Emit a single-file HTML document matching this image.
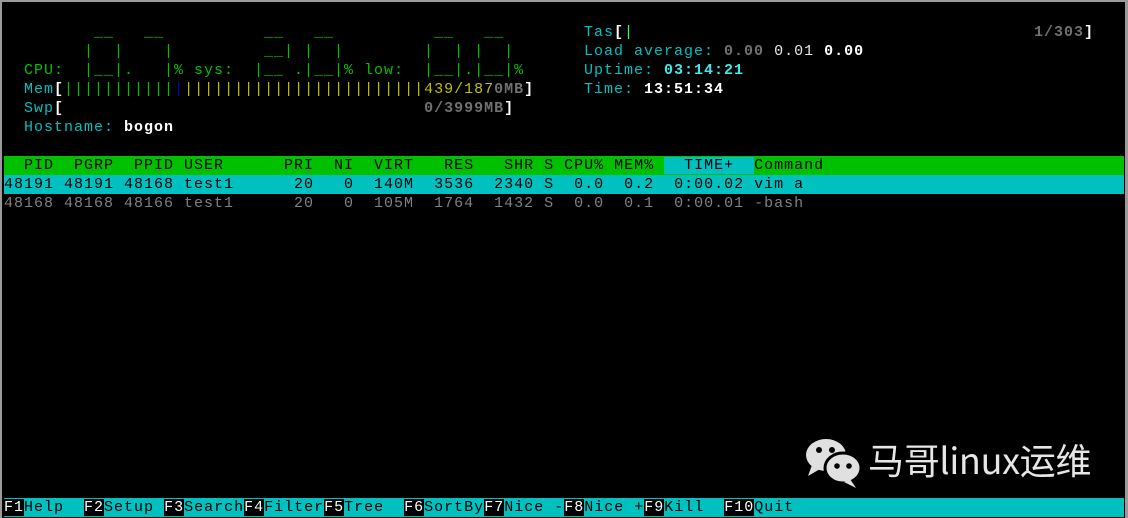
<!DOCTYPE html>
<html><head><meta charset="utf-8"><style>
body{margin:0;background:#000;width:1128px;height:518px;overflow:hidden;position:relative}
#f{position:absolute;left:0;top:0;width:1128px;height:518px;box-sizing:border-box;border-top:2px solid #9a9a9a;border-left:2px solid #9a9a9a;border-right:3px solid #9a9a9a}
#t{position:absolute;left:4px;top:4px;width:1120px;overflow:hidden;font-family:"Liberation Mono",monospace;font-size:15px;letter-spacing:1px;line-height:19px;color:#c0c0c0}
.r{white-space:pre;height:19px;position:relative;overflow:hidden}
.g{color:#00c000}.c{color:#00c0c0}.y{color:#c0c000}.b{color:#0000c0}.gr{color:#707070;font-weight:bold}.w{color:#fff;font-weight:bold}.wn{color:#e8e8e8}
.bc{color:#40e8e8;font-weight:bold}.lg{color:#40ff40}
.hd{background:#00c000;color:#000}.hc{background:#00c0c0;color:#000}
.sel{background:#00c0c0;color:#000}
.dim{color:#808080}
.fk{color:#fff;background:#000}.fl{background:#00c0c0;color:#000}
.abs{position:absolute;top:0}
#wm{position:absolute;left:868px;top:435px;font-family:"Noto Sans CJK SC","WenQuanYi Zen Hei",sans-serif;font-size:36px;color:#e6e6e6;line-height:48px;letter-spacing:-0.3px}
</style></head><body>
<div id="f"></div>
<div id="t">
<div class="r"></div>
<div class="r"><span class="g">         __   __          __   __          __   __</span><span class="abs" style="left:580px"><span class="c">Tas</span><span class="w">[</span><span class="lg">|</span></span><span class="abs" style="left:1030px"><span class="gr">1/303</span><span class="w">]</span></span></div>
<div class="r"><span class="g">        |  |    |         __| |  |        |  | |  |</span><span class="abs" style="left:580px"><span class="c">Load average: </span><span class="gr">0.00</span> <span class="wn">0.01</span> <span class="w">0.00</span></span></div>
<div class="r"><span class="g">  CPU:  |__|.   |% sys:  |__ .|__|% low:  |__|.|__|%</span><span class="abs" style="left:580px"><span class="c">Uptime: </span><span class="bc">03:14:21</span></span></div>
<div class="r">  <span class="c">Mem</span><span class="w">[</span><span class="g">|||||||||||</span><span class="b">|</span><span class="y">||||||||||||||||||||||||439/187</span><span class="gr">0MB</span><span class="w">]</span><span class="abs" style="left:580px"><span class="c">Time: </span><span class="w">13:51:34</span></span></div>
<div class="r">  <span class="c">Swp</span><span class="w">[</span>                                    <span class="gr">0/3999MB</span><span class="w">]</span></div>
<div class="r">  <span class="c">Hostname: </span><span class="w">bogon</span></div>
<div class="r"></div>
<div class="r hd">  PID  PGRP  PPID USER      PRI  NI  VIRT   RES   SHR S CPU% MEM% <span class="hc">  TIME+  </span>Command                                     </div>
<div class="r sel">48191 48191 48168 test1      20   0  140M  3536  2340 S  0.0  0.2  0:00.02 vim a</div>
<div class="r dim">48168 48168 48166 test1      20   0  105M  1764  1432 S  0.0  0.1  0:00.01 -bash</div>
</div>
<div style="position:absolute;left:4px;top:498px;width:1120px;height:19px;overflow:hidden;font-family:'Liberation Mono',monospace;font-size:15px;letter-spacing:1px;line-height:19px;white-space:pre;background:#00c0c0"><span class="fk">F1</span><span class="fl">Help  </span><span class="fk">F2</span><span class="fl">Setup </span><span class="fk">F3</span><span class="fl">Search</span><span class="fk">F4</span><span class="fl">Filter</span><span class="fk">F5</span><span class="fl">Tree  </span><span class="fk">F6</span><span class="fl">SortBy</span><span class="fk">F7</span><span class="fl">Nice -</span><span class="fk">F8</span><span class="fl">Nice +</span><span class="fk">F9</span><span class="fl">Kill  </span><span class="fk">F10</span><span class="fl">Quit</span></div>
<svg style="position:absolute;left:800px;top:436px" width="66" height="54" viewBox="0 0 66 54">
<ellipse cx="26" cy="19" rx="20" ry="16" fill="#e0e0e0"/>
<path d="M12 29 L8 40 L20 33 Z" fill="#e0e0e0"/>
<circle cx="19" cy="14" r="3" fill="#000"/><circle cx="32" cy="14" r="3" fill="#000"/>
<ellipse cx="43" cy="32" rx="18" ry="15" fill="#e0e0e0" stroke="#000" stroke-width="3"/>
<path d="M50 43 L56 52 L44 46 Z" fill="#e0e0e0"/>
<circle cx="37" cy="30" r="2.8" fill="#000"/><circle cx="49" cy="30" r="2.8" fill="#000"/>
</svg>
<div id="wm">马哥linux运维</div>
</body></html>
